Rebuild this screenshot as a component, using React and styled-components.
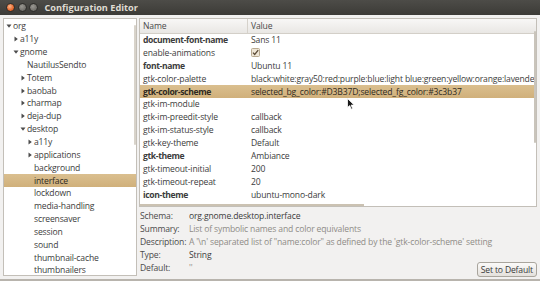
import React from "react";
import styled, {createGlobalStyle} from "styled-components";

const GlobalStyle = createGlobalStyle`
  html, body {
    margin: 0;
    padding: 0;
    background: #f2f1f0;
  }
  * {
    box-sizing: border-box;
  }
`;

const FONT = `"Open Sans", "Liberation Sans", sans-serif`;

// 树形目录的数据
const treeItems = [
    {level: 0, text: "org", arrow: "down"},
    {level: 1, text: "a11y", arrow: "right"},
    {level: 1, text: "gnome", arrow: "down"},
    {level: 2, text: "NautilusSendto"},
    {level: 2, text: "Totem", arrow: "right"},
    {level: 2, text: "baobab", arrow: "right"},
    {level: 2, text: "charmap", arrow: "right"},
    {level: 2, text: "deja-dup", arrow: "right"},
    {level: 2, text: "desktop", arrow: "down"},
    {level: 3, text: "a11y", arrow: "right"},
    {level: 3, text: "applications", arrow: "right"},
    {level: 3, text: "background"},
    {level: 3, text: "interface", selected: true},
    {level: 3, text: "lockdown"},
    {level: 3, text: "media-handling"},
    {level: 3, text: "screensaver"},
    {level: 3, text: "session"},
    {level: 3, text: "sound"},
    {level: 3, text: "thumbnail-cache"},
    {level: 3, text: "thumbnailers"},
];

// 键值列表
const keys = [
    {name: "document-font-name", value: "Sans 11", bold: true},
    {name: "enable-animations", check: true},
    {name: "font-name", value: "Ubuntu 11", bold: true},
    {name: "gtk-color-palette", value: "black:white:gray50:red:purple:blue:light blue:green:yellow:orange:lavender"},
    {name: "gtk-color-scheme", value: "selected_bg_color:#D3B37D;selected_fg_color:#3c3b37", bold: true, selected: true},
    {name: "gtk-im-module", value: ""},
    {name: "gtk-im-preedit-style", value: "callback"},
    {name: "gtk-im-status-style", value: "callback"},
    {name: "gtk-key-theme", value: "Default"},
    {name: "gtk-theme", value: "Ambiance", bold: true},
    {name: "gtk-timeout-initial", value: "200"},
    {name: "gtk-timeout-repeat", value: "20"},
    {name: "icon-theme", value: "ubuntu-mono-dark", bold: true},
    {name: "menubar-accel", value: "F10"},
];

function Arrow({dir}) {
    return (
        <svg width="6" height="6" viewBox="0 0 6 6">
            {dir === "down"
                ? <polygon points="0.5,1.5 5.5,1.5 3,4.8" fill="#4c4c4c"/>
                : <polygon points="1.5,0.5 4.8,3 1.5,5.5" fill="#4c4c4c"/>}
        </svg>
    );
}

function CheckBox() {
    return (
        <svg width="9" height="9" viewBox="0 0 9 9">
            <rect x="0.5" y="0.5" width="8" height="8" rx="1" fill="#efe6d6" stroke="#b9aa91"/>
            <path d="M2 4.6 L3.7 6.4 L7.2 2.2" fill="none" stroke="#5a4a36" strokeWidth="1.3"/>
        </svg>
    );
}

function Cursor() {
    return (
        <CursorBox>
            <svg width="8" height="12" viewBox="0 0 8 12">
                <path d="M0.5 0.5 L0.5 9.5 L2.7 7.6 L4.3 11.2 L5.6 10.6 L4.1 7.1 L7.2 7.1 Z"
                      fill="#1a1a1a" stroke="#ffffff" strokeWidth="0.8"/>
            </svg>
        </CursorBox>
    );
}

export default function App() {
    return (
        <Window>
            <GlobalStyle/>
            {/*标题栏*/}
            <TitleBar>
                <WinButton kind="close"/>
                <WinButton/>
                <WinButton/>
                <Title>Configuration Editor</Title>
            </TitleBar>

            <Body>
                {/*左侧目录树*/}
                <TreePane>
                    {treeItems.map((item, id) => (
                        <TreeRow key={id} level={item.level} selected={item.selected}>
                            <ArrowSlot>{item.arrow && <Arrow dir={item.arrow}/>}</ArrowSlot>
                            <span>{item.text}</span>
                        </TreeRow>
                    ))}
                    <ScrollThumb side="tree"/>
                </TreePane>

                <RightSide>
                    {/*键值列表*/}
                    <ListPane>
                        <Header>
                            <HeadCell width="108px">Name</HeadCell>
                            <HeadCell>Value</HeadCell>
                        </Header>
                        {keys.map((item, id) => (
                            <KeyRow key={id} selected={item.selected}>
                                <NameCell bold={item.bold}>{item.name}</NameCell>
                                <ValueCell>{item.check ? <CheckBox/> : item.value}</ValueCell>
                            </KeyRow>
                        ))}
                        <ScrollThumb side="list"/>
                        <HScrollThumb/>
                        <Cursor/>
                    </ListPane>

                    {/*属性信息*/}
                    <Props>
                        <Label>Schema:</Label>
                        <Val span>org.gnome.desktop.interface</Val>
                        <Label>Summary:</Label>
                        <Val span dim>List of symbolic names and color equivalents</Val>
                        <Label>Description:</Label>
                        <Val span dim>{"A '\\n' separated list of \"name:color\" as defined by the 'gtk-color-scheme' setting"}</Val>
                        <Label>Type:</Label>
                        <Val span>String</Val>
                        <Label>Default:</Label>
                        <Val dim>''</Val>
                        <DefaultButton>Set to Default</DefaultButton>
                    </Props>
                </RightSide>
            </Body>
        </Window>
    );
}

const Window = styled.div`
  width: 540px;
  height: 281px;
  display: flex;
  flex-direction: column;
  background: #f2f1f0;
  font-family: ${FONT};
  font-size: 8.6px;
  letter-spacing: -0.16px;
  color: #3c3c3c;
  overflow: hidden;
  border-bottom: 2px solid #b8b4ad;
`;

const TitleBar = styled.div`
  height: 15px;
  flex-shrink: 0;
  display: flex;
  flex-direction: row;
  align-items: center;
  gap: 2px;
  padding-left: 6px;
  background: linear-gradient(#4d4c48, #3c3b37);
`;

const WinButton = styled.div`
  width: 9px;
  height: 9px;
  flex-shrink: 0;
  border-radius: 50%;
  margin-right: 0.5px;
  background: ${p => p.kind === "close"
          ? "radial-gradient(circle at 40% 35%, #f7b58c, #e9692c 60%, #c94c14)"
          : "radial-gradient(circle at 40% 35%, #9a9892, #6f6d68 70%, #5a5954)"};
  border: 0.5px solid #2e2d2a;
`;

const Title = styled.div`
  margin-left: 4px;
  color: #dfdbd2;
  font-weight: bold;
  font-size: 9.2px;
  letter-spacing: 0;
  white-space: nowrap;
`;

const Body = styled.div`
  flex: 1;
  display: flex;
  flex-direction: row;
  padding: 3px 3px 3px 3px;
  gap: 2px;
  min-height: 0;
`;

const TreePane = styled.div`
  position: relative;
  width: 134px;
  flex-shrink: 0;
  background: #fff;
  border: 1px solid #c3bfb8;
  padding-top: 1px;
  overflow: hidden;
`;

const TreeRow = styled.div`
  height: 12.85px;
  display: flex;
  flex-direction: row;
  align-items: center;
  padding-left: ${p => 2 + p.level * 7}px;
  white-space: nowrap;
  background: ${p => p.selected ? "linear-gradient(#dabf8f, #d0b07b)" : "transparent"};
  color: ${p => p.selected ? "#2f2a22" : "#3c3c3c"};
`;

const ArrowSlot = styled.span`
  display: inline-flex;
  width: 7px;
  flex-shrink: 0;
  align-items: center;
`;

const ScrollThumb = styled.div`
  position: absolute;
  right: 0;
  width: 2px;
  border-radius: 1px;
  top: ${p => p.side === "tree" ? "6px" : "12px"};
  height: ${p => p.side === "tree" ? "120px" : "112px"};
  background: ${p => p.side === "tree" ? "#d8d3ca" : "#c9c4bb"};
`;

const HScrollThumb = styled.div`
  position: absolute;
  left: 0;
  bottom: 0;
  width: 224px;
  height: 2px;
  background: #cbc2b2;
`;

const RightSide = styled.div`
  flex: 1;
  display: flex;
  flex-direction: column;
  min-width: 0;
`;

const ListPane = styled.div`
  position: relative;
  height: 189px;
  flex-shrink: 0;
  background: #fff;
  border: 1px solid #c3bfb8;
  overflow: hidden;
`;

const Header = styled.div`
  height: 14.5px;
  display: flex;
  flex-direction: row;
  background: linear-gradient(#f8f7f6, #e9e7e4);
  border-bottom: 1px solid #d3cfc8;
`;

const HeadCell = styled.div`
  width: ${p => p.width || "auto"};
  flex: ${p => p.width ? "none" : 1};
  display: flex;
  align-items: center;
  padding-left: 3px;
  color: #4a4a4a;
  border-right: ${p => p.width ? "1px solid #d6d2cb" : "none"};
`;

const KeyRow = styled.div`
  height: 12.9px;
  display: flex;
  flex-direction: row;
  align-items: center;
  white-space: nowrap;
  background: ${p => p.selected ? "linear-gradient(#dabf8f, #d0b07b)" : "transparent"};
  color: ${p => p.selected ? "#2f2a22" : "#3c3c3c"};
`;

const NameCell = styled.div`
  width: 108px;
  flex-shrink: 0;
  padding-left: 3px;
  font-weight: ${p => p.bold ? "bold" : "normal"};
  letter-spacing: ${p => p.bold ? "-0.38px" : "inherit"};
  overflow: hidden;
`;

const ValueCell = styled.div`
  flex: 1;
  padding-left: 3px;
  display: flex;
  align-items: center;
  overflow: hidden;
`;

const CursorBox = styled.div`
  position: absolute;
  left: 207px;
  top: 79px;
  line-height: 0;
`;

const Props = styled.div`
  display: grid;
  grid-template-columns: 49px 1fr auto;
  grid-auto-rows: 12.8px;
  padding: 3px 0 0 1px;
  align-items: center;
`;

const Label = styled.div`
  color: #4a4a4a;
  white-space: nowrap;
`;

const Val = styled.div`
  grid-column: ${p => p.span ? "2 / 4" : "2 / 3"};
  color: ${p => p.dim ? "#8f8c87" : "#3c3c3c"};
  white-space: nowrap;
`;

const DefaultButton = styled.div`
  grid-column: 3 / 4;
  align-self: start;
  margin-top: 1px;
  height: 15px;
  padding: 0 3px;
  display: flex;
  align-items: center;
  border: 1px solid #a9a59d;
  border-radius: 3px;
  background: linear-gradient(#fbfaf9, #e4e1dc);
  color: #3a3a3a;
  white-space: nowrap;
`;
